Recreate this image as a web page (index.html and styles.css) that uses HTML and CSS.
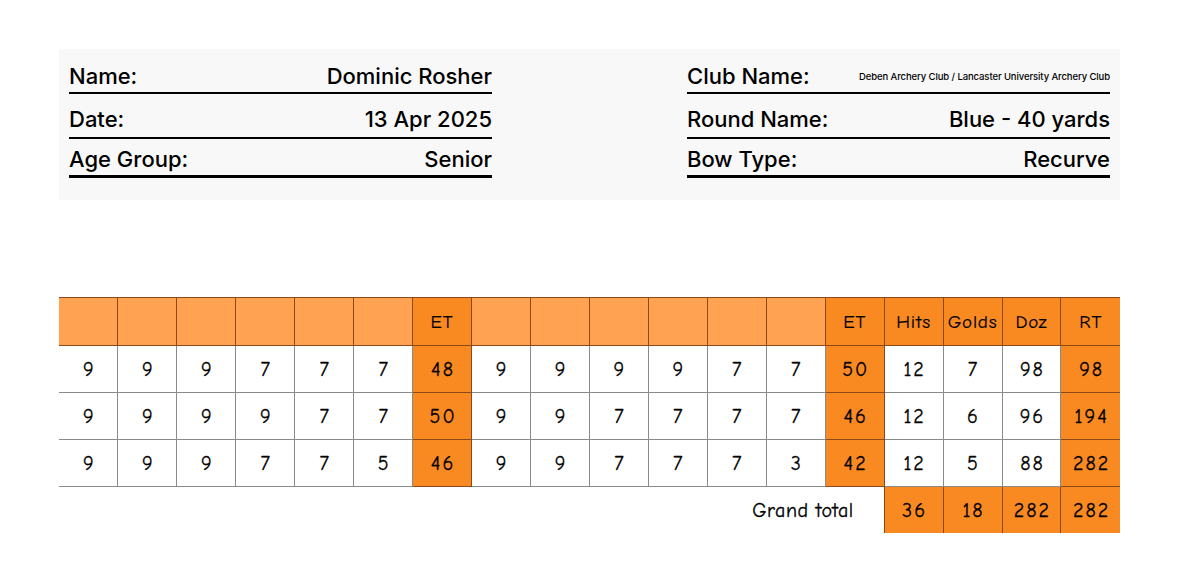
FILE: index.html
```html
<!DOCTYPE html>
<html lang="en">
<head>
<meta charset="utf-8">
<title>Score sheet</title>
<link rel="stylesheet" href="styles.css">
</head>
<body>
<div class="page">
  <section class="info">
    <div class="info-col">
      <div class="field f1"><span class="label">Name:</span><span class="value">Dominic Rosher</span></div>
      <div class="field f2"><span class="label">Date:</span><span class="value">13 Apr 2025</span></div>
      <div class="field f3"><span class="label">Age Group:</span><span class="value">Senior</span></div>
    </div>
    <div class="info-col">
      <div class="field f1"><span class="label">Club Name:</span><span class="value small">Deben Archery Club / Lancaster University Archery Club</span></div>
      <div class="field f2"><span class="label">Round Name:</span><span class="value">Blue - 40 yards</span></div>
      <div class="field f3"><span class="label">Bow Type:</span><span class="value">Recurve</span></div>
    </div>
  </section>

  <table class="scores">
    <thead>
      <tr>
        <th></th><th></th><th></th><th></th><th></th><th></th><th class="dark">ET</th>
        <th></th><th></th><th></th><th></th><th></th><th></th><th class="dark">ET</th>
        <th class="dark">Hits</th><th class="dark">Golds</th><th class="dark">Doz</th><th class="dark">RT</th>
      </tr>
    </thead>
    <tbody>
      <tr>
        <td>9</td><td>9</td><td>9</td><td>7</td><td>7</td><td>7</td><td class="dark">48</td>
        <td>9</td><td>9</td><td>9</td><td>9</td><td>7</td><td>7</td><td class="dark">50</td>
        <td>12</td><td>7</td><td>98</td><td class="dark">98</td>
      </tr>
      <tr>
        <td>9</td><td>9</td><td>9</td><td>9</td><td>7</td><td>7</td><td class="dark">50</td>
        <td>9</td><td>9</td><td>7</td><td>7</td><td>7</td><td>7</td><td class="dark">46</td>
        <td>12</td><td>6</td><td>96</td><td class="dark">194</td>
      </tr>
      <tr>
        <td>9</td><td>9</td><td>9</td><td>7</td><td>7</td><td>5</td><td class="dark">46</td>
        <td>9</td><td>9</td><td>7</td><td>7</td><td>7</td><td>3</td><td class="dark">42</td>
        <td>12</td><td>5</td><td>88</td><td class="dark">282</td>
      </tr>
      <tr class="total">
        <td colspan="14" class="total-label">Grand total</td>
        <td class="dark">36</td><td class="dark">18</td><td class="dark">282</td><td class="dark">282</td>
      </tr>
    </tbody>
  </table>
</div>
</body>
</html>
```

FILE: styles.css
```css
html, body {
  margin: 0;
  padding: 0;
  background: #ffffff;
}

.page {
  padding: 49px 59px 0 59px;
}

.info {
  background: #f8f8f8;
  display: flex;
  justify-content: space-between;
  padding: 14px 10px 22px 10px;
  font-family: Inter, "Noto Sans", sans-serif;
  color: #000;
}

.info-col {
  width: 423px;
  display: flex;
  flex-direction: column;
}

.field {
  display: flex;
  justify-content: space-between;
  align-items: baseline;
  font-size: 22px;
  line-height: 26px;
  font-weight: 500;
  border-bottom: 2px solid #000;
}

.f1 { padding-bottom: 3px; }
.f2 { margin-top: 12px; padding-bottom: 5px; }
.f3 { margin-top: 7px; padding-bottom: 3px; border-bottom-width: 3px; }

.value.small {
  font-size: 9.5px;
  line-height: 12px;
  letter-spacing: -0.1px;
  position: relative;
  top: -4px;
}

.scores {
  margin-top: 97px;
  width: 1061px;
  table-layout: fixed;
  border-collapse: collapse;
  font-family: "Comic Sans MS", "Comic Neue", "DejaVu Sans", sans-serif;
  font-size: 20px;
  color: #000;
  -webkit-text-stroke: 0.3px #000;
}

.scores th,
.scores td {
  text-align: center;
  padding: 0;
  border: 1px solid #8a8a8a;
}

.scores th {
  height: 47px;
  font-weight: normal;
  background: #ffa352;
  border-color: #8b4a18;
  font-size: 19px;
  letter-spacing: 0.8px;
  -webkit-text-stroke: 0.2px #000;
}

.scores td {
  height: 46px;
  letter-spacing: 2px;
  padding-left: 2px;
}

.scores tr > :first-child {
  border-left: none;
}

.scores tr > :last-child {
  border-right: none;
}

.scores .dark {
  background: #f98a22;
  border-color: #8b4a18;
}

.scores .total td {
  border-bottom: none;
}

.scores .total-label {
  border: none;
  text-align: right;
  padding-right: 30px;
  letter-spacing: 0.5px;
  background: #ffffff;
}
```
